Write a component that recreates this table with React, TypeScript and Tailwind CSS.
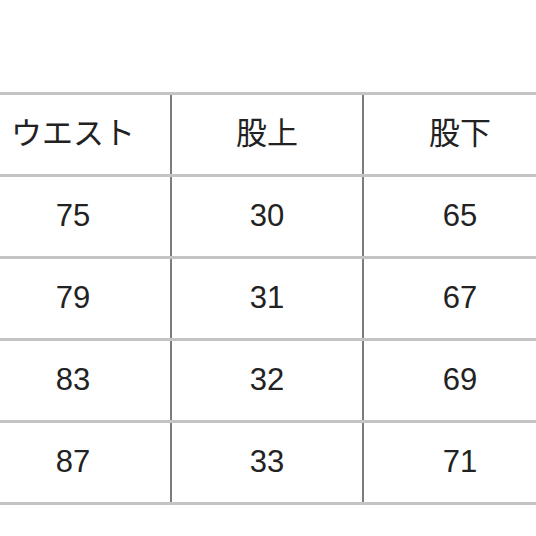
const header = ["ウエスト", "股上", "股下"];
const rows = [
  ["75", "30", "65"],
  ["79", "31", "67"],
  ["83", "32", "69"],
  ["87", "33", "71"],
];

const font = { fontFamily: '"Liberation Sans", "Noto Sans CJK JP", sans-serif' };

function Row({ cells, last }: { cells: string[]; last?: boolean }) {
  return (
    <div
      className={
        "flex h-[82px] border-t-[3px] border-[#c4c4c4] " +
        (last ? "h-[85px] border-b-[3px]" : "")
      }
    >
      <div className="flex w-[196px] shrink-0 items-center justify-center border-r-2 border-[#7c7c7c] pb-[3px]">
        {cells[0]}
      </div>
      <div className="flex w-[192px] shrink-0 items-center justify-center border-r-2 border-[#7c7c7c] pb-[3px]">
        {cells[1]}
      </div>
      <div className="flex w-[192px] shrink-0 items-center justify-center pb-[3px]">{cells[2]}</div>
    </div>
  );
}

export default function App() {
  return (
    <div className="h-[536px] w-[536px] overflow-hidden bg-white" style={font}>
      <div className="ml-[-24px] pt-[92px] text-[31px] leading-none text-[#222]">
        <Row cells={header} />
        {rows.map((r, i) => (
          <Row key={i} cells={r} last={i === rows.length - 1} />
        ))}
      </div>
    </div>
  );
}
